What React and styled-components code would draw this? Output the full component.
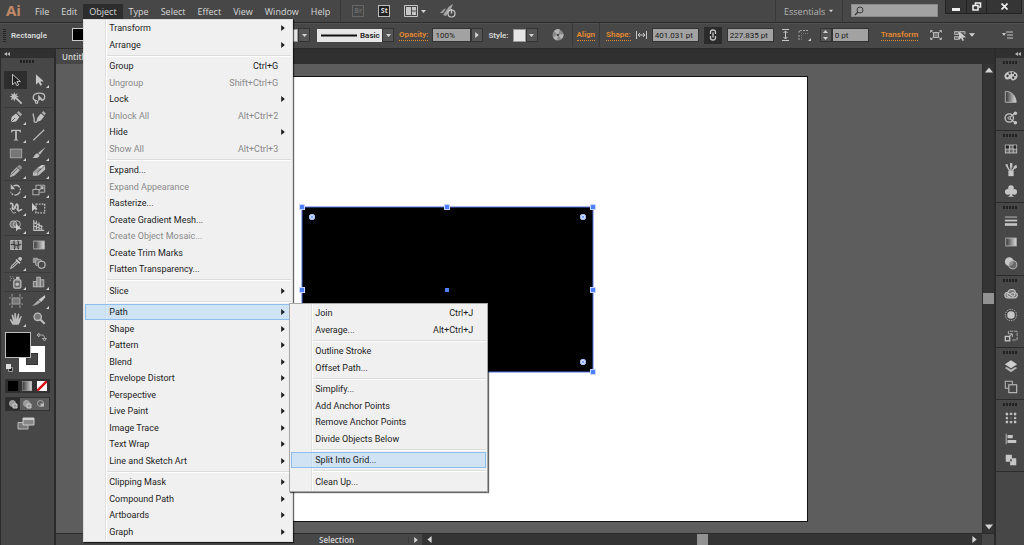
import React from 'react';
import styled, { createGlobalStyle, css } from 'styled-components';

const theme = {
  panel: '#474747',
  dark: '#303030',
  line: '#2b2b2b',
  canvas: '#5d5d5d',
  field: '#a2a2a2',
  icon: '#bdbdbd',
  orange: '#e68a2e',
  blue: '#4f80ff',
};

const GlobalStyle = createGlobalStyle`
  *, *::before, *::after { box-sizing: border-box; }
  body {
    margin: 0;
    overflow: hidden;
    background: ${theme.canvas};
    font-family: "Open Sans", "Noto Sans", sans-serif;
    font-size: 9px;
    color: #d8d8d8;
  }
  button, input, select { font: inherit; color: inherit; border: 0; padding: 0; margin: 0; background: none; border-radius: 0; }
  svg { display: block; flex: none; }
`;

// icons, all on a 16 x 16 grid
const icons = {
  select: <path d="M4 1.5v12l3-3 2 4 2-1-2-3.8h4z" fill="#1f1f1f" stroke="#d5d5d5" />,
  direct: <path d="M4.5 1.5v12l3-3 2 4 2-1-2-3.8h4z" fill="#c6c6c6" />,
  wand: <><path d="M6 1l1 3 3-1.500-1.500 3 3 1-3 1 1.500 3-3-1.500-1 3-1-3-3 1.500L3.500 7.500l-3-1 3-1L2 2.500 5 4z" fill="#bdbdbd" /><path d="M8.500 8.500l6 6" stroke="#bdbdbd" strokeWidth="2" /></>,
  lasso: <><path d="M6 11c-4 0-5-2-4.500-4.500C2 4 5 2.500 8.500 2.500s6 1.500 6 4-2 4-4 4.300M4.500 10.500c-1 1-1 3 .5 3.500s2-1 1-2.500" fill="none" stroke="#bdbdbd" strokeWidth="1.500" /><path d="M7 4v8l2-2 4 .2z" fill="#bdbdbd" /></>,
  pen: <><path d="M2 14l1-6 5-4 4 4-4 5z" fill="#c4c4c4" /><path d="M9 3l2-2 4 4-2 2z" fill="#a9a9a9" /><path d="M2.500 13.500L7 9" stroke="#474747" /></>,
  curve: <><path d="M5 14l1-5 4-5 4 3-4 5z" fill="#c4c4c4" /><path d="M11 3l2-2 3 3-2 2z" fill="#a9a9a9" /><path d="M1.500 4c-1 3 1.500 4 1 7s1 3.500 3 3" fill="none" stroke="#bdbdbd" strokeWidth="1.500" /></>,
  type: <path d="M2.500 2h11v3h-1l-1-1.700H9V13l1.500.500v.800h-5v-.800L7 13V3.300H4.500L3.500 5h-1z" fill="#bdbdbd" />,
  line: <path d="M1.500 14L14 2" stroke="#bdbdbd" strokeWidth="1.300" />,
  rect: <rect x="1.500" y="3.500" width="13" height="10" fill="#777" stroke="#a8a8a8" />,
  brush: <><path d="M15.500 1L7 8l2 2z" fill="#bdbdbd" /><path d="M6.500 8.500l2 2C8 14 4 14 0 13.500c2-.5 2-1 3-3 .7-1.500 2-2 3.500-2z" fill="#bdbdbd" /></>,
  pencil: <><path d="M1 15l1.500-5L9 3.500l3.500 3.500L6 13.500z" fill="#b5b5b5" /><path d="M9.500 3l1.500-1.500c1.500-1 4.500 1.500 3.500 3.500L13 6.500z" fill="#8d8d8d" /><path d="M3 12l7-7" stroke="#555" /></>,
  eraser: <><path d="M6 4.500L11 1h4l-4.500 4.500z" fill="#ccc" /><path d="M1 9l5-4.500h4.500L6.500 9.500z" fill="#999" /><path d="M1 9.500h5.500v4H1zM7 9.500L15 2v4.500l-8 7z" fill="#bbb" /></>,
  rotate: <><path d="M5 3.500c6-3 10 3 7 7.500s-9 3-10-1" fill="none" stroke="#bdbdbd" strokeWidth="1.500" strokeDasharray="8 1.500 2 1.500" /><path d="M2 1v6h5z" fill="#bdbdbd" /></>,
  scale: <><rect x="1" y="7.500" width="7" height="6" fill="none" stroke="#bdbdbd" /><path d="M4.500 7V2.500h10v8H8.500" fill="none" stroke="#bdbdbd" /><path d="M8 8.500l4-3.500M9.500 4.500H12.500V7.500" fill="none" stroke="#bdbdbd" strokeWidth="1.300" /></>,
  width: <><path d="M1 3c3-1 4 1 3 4s2 3 3 0 2-5 3-2-1 6 1 6 3-2 4-1" fill="none" stroke="#bdbdbd" strokeWidth="2" /><path d="M1 8l4 6 3-1M5 5l6 7" fill="none" stroke="#bdbdbd" /></>,
  free: <><rect x="4.500" y="3.500" width="10" height="10" fill="none" stroke="#bdbdbd" strokeWidth="1.500" strokeDasharray="2 1.300" /><path d="M0 2v10l2.500-2.500 4-.2z" fill="#c9c9c9" /></>,
  builder: <><circle cx="5" cy="6" r="4" fill="#777" stroke="#bdbdbd" /><circle cx="9" cy="6" r="4" fill="none" stroke="#bdbdbd" /><path d="M8 5v9l2.300-2.300 4 0z" fill="#ccc" /></>,
  persp: <><path d="M2 1v12h12M2 4l10 5M2 8l8 3M5 2v10M8 4v9M11 7v6" fill="none" stroke="#bdbdbd" strokeWidth="1.300" /></>,
  mesh: <><rect x="2" y="3" width="12" height="10" fill="#999" stroke="#ccc" /><path d="M2 8c3-3 5 3 12-1M6 3c-2 4 3 5 0 10M10 3c3 4-2 5 1 10" fill="none" stroke="#333" strokeWidth="1.200" /></>,
  gradient: <><rect x="2" y="3.500" width="12" height="9" fill="url(#gr)" stroke="#b5b5b5" /></>,
  dropper: <><path d="M10 3l1.500-1.500c2-1.500 4.500 1 3 3L13 6z" fill="#c4c4c4" /><path d="M8 4l4.500 4.500" stroke="#c4c4c4" strokeWidth="2" /><path d="M9 5.500L3 11.500l-1 2.500 2.500-1L10.500 7" fill="none" stroke="#bdbdbd" strokeWidth="1.200" /></>,
  blend: <><rect x="1" y="2" width="6" height="6" fill="#999" /><rect x="4" y="4" width="7" height="7" rx="2" fill="#777" stroke="#aaa" /><circle cx="11" cy="10" r="4" fill="#474747" stroke="#bdbdbd" strokeWidth="1.300" /></>,
  spray: <><rect x="5.500" y="5.500" width="8" height="9.500" rx="1.500" fill="#666" stroke="#bdbdbd" strokeWidth="1.500" /><path d="M8 2h4v3H8z" fill="#bdbdbd" /><circle cx="9.500" cy="10.500" r="2" fill="#bdbdbd" /><path d="M1 2h1M4 2h1M2 4h1M5 4h1M1 6h1" stroke="#bdbdbd" /></>,
  graph: <><rect x="1.500" y="7.500" width="4" height="6" fill="#777" stroke="#bdbdbd" /><rect x="5.500" y="2.500" width="4" height="11" fill="#888" stroke="#bdbdbd" /><rect x="9.500" y="5.500" width="4" height="8" fill="#777" stroke="#bdbdbd" /></>,
  artboard: <><rect x="3.500" y="4.500" width="9" height="7" fill="#777" stroke="#aaa" /><path d="M3.500 0v3M12.500 0v3M3.500 13v3M12.500 13v3M0 4.500h2M14 4.500h2M0 11.500h2M14 11.500h2" stroke="#aaa" /></>,
  slice: <><path d="M0 14L7 7l3 2-4 3z" fill="#aaa" /><path d="M7.500 6.500L15 1v3l-4.500 5z" fill="#ccc" /></>,
  hand: <path d="M4 14.500L1 9c0-1 1.300-1.300 2 0l1.500 1.500L3 4c0-1.200 1.500-1.500 2 0l1.200 4L6 2c0-1.300 2-1.300 2 0l.5 6L10 2.500c.3-1.200 2-.8 1.700.5L11 8.500l2-3.500c.8-1 2-.2 1.500.8-1.500 3-1 5-3.500 8.700z" fill="#b9b9b9" />,
  zoom: <><circle cx="6.500" cy="5.500" r="4.200" fill="#777" stroke="#bdbdbd" strokeWidth="1.500" /><path d="M9.500 8.500l5 5" stroke="#bdbdbd" strokeWidth="2.500" /></>,
  palette: <><path d="M8 2.500c4 0 7.500 2 7.500 5S13 13 10 13c-1.500 0-1.500-2-3-2s-1.500 1-3.500 1S.5 10 .5 8 3 2.500 8 2.500z" fill="#c6c6c6" /><g fill="#333"><circle cx="4" cy="8" r="1.300" /><circle cx="6.500" cy="5" r="1.200" /><circle cx="10" cy="4.700" r="1.200" /><circle cx="12.500" cy="7" r="1.200" /><circle cx="10.500" cy="10" r="1.300" /></g></>,
  guide: <path d="M1.500 1.500c7 0 12 5 12.500 12.500H1.500z" fill="url(#gr)" stroke="#bdbdbd" />,
  themes: <><circle cx="6" cy="8" r="4.800" fill="none" stroke="#c6c6c6" strokeWidth="1.500" /><circle cx="6" cy="8" r="1.500" fill="none" stroke="#c6c6c6" /><path d="M7 7l6-5M7 9l6 4.500" stroke="#c6c6c6" strokeWidth="1.200" /><circle cx="13" cy="2.500" r="2" fill="#c6c6c6" /><circle cx="13" cy="13.500" r="2" fill="#c6c6c6" /></>,
  swatches: <><rect x="1.500" y="3.500" width="13" height="9" fill="#666" stroke="#c6c6c6" /><path d="M1.500 8h13M6 3.500v9M10.500 3.500v9" stroke="#c6c6c6" /><path d="M2 4h3.500v3.500H2zM11 4h3v3.500h-3z" fill="#222" /></>,
  brushes: <><path d="M5 9h6v6H5z" fill="#c6c6c6" /><path d="M8 9V1M6.500 9L3 3M9.500 9l3-5" stroke="#c6c6c6" strokeWidth="1.500" /><path d="M1 2l3-1 1 4zM7 0h2.500v5H7zM11 4l3-2 1 3-3 2z" fill="#c6c6c6" /></>,
  symbols: <><circle cx="8" cy="4.500" r="3.200" fill="#c6c6c6" /><circle cx="4.300" cy="9" r="3.200" fill="#c6c6c6" /><circle cx="11.700" cy="9" r="3.200" fill="#c6c6c6" /><path d="M7 6h2l.5 7 2 1.500h-7l2-1.500z" fill="#c6c6c6" /></>,
  stroke: <><path d="M1 3.500h14" stroke="#c6c6c6" /><path d="M1 7.500h14" stroke="#c6c6c6" strokeWidth="2" /><path d="M1 12h14" stroke="#c6c6c6" strokeWidth="3" /></>,
  transparency: <><circle cx="6" cy="6.500" r="5" fill="#c6c6c6" /><circle cx="10" cy="10" r="4.700" fill="#777" fillOpacity=".7" stroke="#c6c6c6" /></>,
  cloud: <><path d="M4.500 12.500C-.5 12.500 0 6 4.500 6 6 1.500 13 2 13 6.500c4 1.500 2 6-1 6z" fill="#777" stroke="#c6c6c6" strokeWidth="1.300" /><path d="M7 10.500C3 12 2.500 7.500 5 7.500c2 0 3 3 5.500 3 2.500-.2 2.500-4.500-1-4-1 .2-2 1.500-2 1.500" fill="none" stroke="#c6c6c6" strokeWidth="1.300" /></>,
  appearance: <><circle cx="8" cy="8" r="4.300" fill="#c6c6c6" /><circle cx="8" cy="8" r="6.500" fill="none" stroke="#c6c6c6" strokeDasharray="1.500 1.300" /></>,
  export: <><path d="M5 6V2.500h10v10H9" fill="none" stroke="#b6b6b6" strokeDasharray="4 1" /><rect x="1.500" y="8.500" width="5" height="5" fill="none" stroke="#c6c6c6" strokeWidth="1.500" /><path d="M5 9l4-3M6 5.500h3.500V9" fill="none" stroke="#c6c6c6" /></>,
  layers: <><path d="M8 1.500L15 6l-7 4.500L1 6z" fill="#cfcfcf" /><path d="M3 9l5 3 5-3 2 1.200L8 15l-7-4.800z" fill="#b5b5b5" /></>,
  artboards: <><path d="M5 9.500H1.500v-8h8V5" fill="none" stroke="#b6b6b6" strokeWidth="1.200" /><rect x="5.500" y="5.500" width="9" height="9" fill="none" stroke="#c6c6c6" strokeWidth="1.200" /></>,
  transform: <><rect x="3.500" y="3.500" width="9" height="9" fill="none" stroke="#b6b6b6" strokeDasharray="1 1" /><path d="M2 2h2.500v2.500H2zM7 2h2v2.500H7zM11.500 2H14v2.500h-2.500zM2 7h2.500v2H2zM11.500 7H14v2h-2.500zM2 11.500h2.500V14H2zM7 11.500h2V14H7zM11.500 11.500H14V14h-2.500zM7.500 7.500h1v1h-1z" fill="#c6c6c6" /></>,
  align: <><path d="M2.500 2v12" stroke="#c6c6c6" /><path d="M4 3.500h6v3.500H4zM4 9h10v3.500H4z" fill="#c6c6c6" /></>,
  pathfinder: <path d="M2 2h7v4h5v8H7v-4H2zM7 7v2.500h2V7z" fillRule="evenodd" fill="#c6c6c6" />,
};

const Icon = ({ name, size = 14 }) => (
  <svg width={size} height={size} viewBox="0 0 16 16" aria-hidden="true">{icons[name]}</svg>
);

const Arrow = ({ dir = 'down', size = 5, color = '#d4d4d4' }) => {
  const d = { down: 'M0 2h10L5 8z', up: 'M0 8h10L5 2z', right: 'M2 0v10l6-5z', left: 'M8 0v10L2 5z' }[dir];
  return <svg width={size} height={size} viewBox="0 0 10 10" aria-hidden="true"><path d={d} fill={color} /></svg>;
};

const Collapse = () => (
  <svg width="6" height="4" viewBox="0 0 6 4" aria-hidden="true"><path d="M3 0v4L0 2zM6 0v4L3 2z" fill="#b5b5b5" /></svg>
);

const objectMenu = [
  ['Transform', '>'], ['Arrange', '>'], null,
  ['Group', 'Ctrl+G'], ['Ungroup', 'Shift+Ctrl+G', true], ['Lock', '>'], ['Unlock All', 'Alt+Ctrl+2', true], ['Hide', '>'], ['Show All', 'Alt+Ctrl+3', true], null,
  ['Expand...'], ['Expand Appearance', '', true], ['Rasterize...'], ['Create Gradient Mesh...'], ['Create Object Mosaic...', '', true], ['Create Trim Marks'], ['Flatten Transparency...'], null,
  ['Slice', '>'], null,
  ['Path', '>'], ['Shape', '>'], ['Pattern', '>'], ['Blend', '>'], ['Envelope Distort', '>'], ['Perspective', '>'], ['Live Paint', '>'], ['Image Trace', '>'], ['Text Wrap', '>'], ['Line and Sketch Art', '>'], null,
  ['Clipping Mask', '>'], ['Compound Path', '>'], ['Artboards', '>'], ['Graph', '>'],
];

const pathMenu = [
  ['Join', 'Ctrl+J'], ['Average...', 'Alt+Ctrl+J'], null,
  ['Outline Stroke'], ['Offset Path...'], null,
  ['Simplify...'], ['Add Anchor Points'], ['Remove Anchor Points'], ['Divide Objects Below'], null,
  ['Split Into Grid...'], null,
  ['Clean Up...'],
];

const toolGroups = [
  ['select', 'direct', 'wand', 'lasso'],
  ['pen', 'curve', 'type', 'line', 'rect', 'brush', 'pencil', 'eraser'],
  ['rotate', 'scale', 'width', 'free', 'builder', 'persp'],
  ['mesh', 'gradient', 'dropper', 'blend'],
  ['spray', 'graph'],
  ['artboard', 'slice', 'hand', 'zoom'],
];
const noFlyout = ['select', 'wand', 'lasso', 'curve', 'free', 'mesh', 'gradient', 'blend', 'artboard', 'zoom'];

const dockGroups = [
  ['palette', 'guide', 'themes'],
  ['swatches', 'brushes', 'symbols'],
  ['stroke', 'gradient', 'transparency'],
  ['cloud', 'appearance', 'export'],
  ['layers', 'artboards'],
  ['transform', 'align', 'pathfinder'],
];

const MenuList = ({ items, active, submenu, ...rest }) => (
  <Menu role="menu" {...rest}>
    {items.map((item, i) => {
      if (!item) return <MenuLine key={i} />;
      const [label, hint, disabled] = item;
      return (
        <MenuRow key={label}>
          <MenuItem role="menuitem" disabled={disabled} $active={label === active}>
            <span>{label}</span>
            {hint === '>' ? <ItemArrow><Arrow dir="right" size={6} color="#1c1c1c" /></ItemArrow> : <span>{hint}</span>}
          </MenuItem>
          {label === active && submenu}
        </MenuRow>
      );
    })}
  </Menu>
);

const MenuBar = () => (
  <Bar>
    <Logo>Ai</Logo>
    {['File', 'Edit', 'Object', 'Type', 'Select', 'Effect', 'View', 'Window', 'Help'].map((name) => (
      <MenuAnchor key={name}>
        <MenuButton $open={name === 'Object'}>{name}</MenuButton>
        {name === 'Object' && (
          <MenuList
            items={objectMenu}
            active="Path"
            submenu={<MenuList items={pathMenu} active="Split Into Grid..." $sub />}
          />
        )}
      </MenuAnchor>
    ))}
    <AppIcons>
      <AppBadge $dim>Br</AppBadge>
      <AppBadge>St</AppBadge>
      <IconButton aria-label="Arrange documents">
        <svg width="14" height="12" viewBox="0 0 14 12"><path d="M.5.5h13v11H.5z" fill="none" stroke="#c6c6c6" /><path d="M2 2h5v8H2zM8 2h4v3.500H8zM8 6.500h4V10H8z" fill="#c6c6c6" /></svg>
        <Arrow />
      </IconButton>
      <IconButton aria-label="GPU performance">
        <svg width="16" height="14" viewBox="0 0 16 14"><path d="M0 9L4 5l2-.5L3 9zM3 11L9 2.500 13 0l-2 5-5 7zM6 11l5-6" fill="#a5a5a5" /><circle cx="11.500" cy="9.500" r="3.500" fill="#474747" stroke="#ccc" strokeWidth="1.200" /><path d="M11.500 5v4.500" stroke="#ccc" strokeWidth="1.400" /></svg>
      </IconButton>
    </AppIcons>
    <Workspace>Essentials<Arrow size={4} /></Workspace>
    <Search>
      <svg width="10" height="10" viewBox="0 0 10 10"><circle cx="6" cy="4" r="3" fill="none" stroke="#3a3a3a" /><path d="M4 6L1 9" stroke="#3a3a3a" strokeWidth="1.500" /></svg>
      <input aria-label="Search" />
    </Search>
    <WindowButtons>
      <button aria-label="Minimize"><svg width="8" height="9" viewBox="0 0 8 9"><path d="M0 6h8v3H0z" fill="#eee" /></svg></button>
      <button aria-label="Restore"><svg width="10" height="9" viewBox="0 0 10 9"><path d="M3.500 3V1h5v4H7M1 3.500h5V8H1z" fill="none" stroke="#eee" strokeWidth="1.600" /></svg></button>
      <button aria-label="Close"><svg width="7" height="7" viewBox="0 0 7 7"><path d="M.5.5l6 6M6.500.5l-6 6" stroke="#eee" strokeWidth="1.700" /></svg></button>
    </WindowButtons>
  </Bar>
);

const ControlBar = () => (
  <Control>
    <SideGrip />
    <ObjectName>Rectangle</ObjectName>
    <FillGroup>
      <Swatch $dark aria-label="Fill" />
      <Combo><Swatch aria-label="Variable width profile" /><DropButton aria-label="Width profiles"><Arrow /></DropButton></Combo>
    </FillGroup>
    <Combo>
      <BrushField>
        <svg width="36" height="3" viewBox="0 0 36 3"><path d="M0 1.500h36" stroke="#111" strokeWidth="2" /></svg>
        <select aria-label="Brush definition"><option>Basic</option></select>
      </BrushField>
      <DropButton aria-label="Brushes"><Arrow /></DropButton>
    </Combo>
    <Field>
      <PanelLink href="#opacity" id="opacity-label">Opacity:</PanelLink>
      <Combo>
        <ValueInput $w={39} defaultValue="100%" aria-labelledby="opacity-label" />
        <DropButton aria-label="Opacity slider"><Arrow dir="right" size={6} /></DropButton>
      </Combo>
    </Field>
    <Field>
      <StyleLabel>Style:</StyleLabel>
      <Combo><Swatch aria-label="Graphic style" /><DropButton aria-label="Graphic styles"><Arrow /></DropButton></Combo>
    </Field>
    <RecolorSection>
      <IconButton aria-label="Recolor artwork">
        <svg width="12" height="12" viewBox="0 0 12 12"><circle cx="6" cy="6" r="5.500" fill="#8a8a8a" /><path d="M6 6L2 2a5.500 5.500 0 0 1 6-1.500zM6 6l5.500-1a5.500 5.500 0 0 1-2 5zM6 6l-1 5.500A5.500 5.500 0 0 1 1 8z" fill="#b5b5b5" /><circle cx="6" cy="6" r="1" fill="#333" /></svg>
      </IconButton>
    </RecolorSection>
    <Section><PanelLink href="#align">Align</PanelLink></Section>
    <ShapeGroup>
      <PanelLink href="#shape">Shape:</PanelLink>
      <svg width="11" height="8" viewBox="0 0 11 8"><path d="M.5 0v8M10.500 0v8M2 4h7M4 2L2 4l2 2M7 2l2 2-2 2" fill="none" stroke="#c6c6c6" /></svg>
      <ValueInput $w={47} defaultValue="401.031 pt" aria-label="Shape width" />
      <LinkButton aria-label="Link width and height">
        <svg width="8" height="12" viewBox="0 0 8 12"><path d="M1.500 5V3a2.500 2 0 0 1 5 0v2M1.500 7v2a2.500 2 0 0 0 5 0V7M4 3.500v5" fill="none" stroke="#c6c6c6" strokeWidth="1.300" /></svg>
      </LinkButton>
      <ValueInput $w={47} defaultValue="227.835 pt" aria-label="Shape height" />
    </ShapeGroup>
    <CornerGroup>
      <svg width="7" height="12" viewBox="0 0 7 12"><path d="M0 .5h7M0 11.500h7M3.500 2v8M1.500 4l2-2 2 2M1.500 8l2 2 2-2" fill="none" stroke="#c6c6c6" /></svg>
      <IconButton aria-label="Corner type">
        <svg width="13" height="12" viewBox="0 0 13 12"><path d="M1 11V5M5 1.500h5" stroke="#aaa" strokeDasharray="2 1" /><path d="M1 3.500C1 2 2 1.500 3.500 1.500" fill="none" stroke="#ccc" /><path d="M3.500 11V4.500H10" fill="none" stroke="#777" strokeDasharray="1 1" /><path d="M13 9v3h-3z" fill="#ccc" /></svg>
      </IconButton>
      <Combo>
        <Spinner aria-label="Step corner radius"><Arrow dir="up" /><Arrow /></Spinner>
        <ValueInput $w={37} defaultValue="0 pt" aria-label="Corner radius" />
      </Combo>
    </CornerGroup>
    <Section $last>
      <PanelLink href="#transform">Transform</PanelLink>
      <IconButton aria-label="Isolate selected object">
        <svg width="12" height="10" viewBox="0 0 12 10"><path d="M3.500 2.500h5v5h-5z" fill="#777" stroke="#bbb" /><path d="M.5 2.500v-2h2M9.500.5h2v2M.5 7.500v2h2M9.500 9.500h2v-2M1 1l2 1.500M11 1L9 2.500M1 9l2-1.500M11 9L9 7.500" fill="none" stroke="#b5b5b5" /></svg>
      </IconButton>
      <IconButton aria-label="Select similar objects">
        <svg width="12" height="11" viewBox="0 0 12 11"><path d="M.5 1.500h4v3h-4zM.5 6.500h4v3h-4zM6 1.500h5v3" fill="#777" stroke="#aaa" /><path d="M5 1v9l2-2 1.500 3 1.500-.8L8.500 7.500H12z" fill="#ccc" /></svg>
        <Arrow size={6} />
      </IconButton>
    </Section>
    <PanelMenu aria-label="Panel menu">
      <svg width="11" height="8" viewBox="0 0 11 8"><path d="M4 1h7M5 4h6M5 7h6" stroke="#c6c6c6" /><path d="M0 2h4L2 5z" fill="#c6c6c6" /></svg>
    </PanelMenu>
  </Control>
);

const Tools = () => (
  <ToolPanel>
    <PanelHead><Collapse /></PanelHead>
    <Grip />
    {toolGroups.map((group) => (
      <ToolGroup key={group[0]}>
        {group.map((name) => (
          <Tool key={name} aria-label={name} $active={name === 'select'} $flyout={!noFlyout.includes(name)}>
            <Icon name={name} />
          </Tool>
        ))}
      </ToolGroup>
    ))}
    <svg width="44" height="41" viewBox="0 0 44 41" aria-label="Fill and stroke">
      <path d="M14 14h26v26H14zM21 21v12h12V21z" fill="#fff" fillRule="evenodd" />
      <path d="M21.500 21.500h11v11h-11z" fill="none" stroke="#333" />
      <rect x=".5" y=".5" width="25" height="25" fill="#000" stroke="#bdbdbd" />
      <path d="M34 3h3c2 0 2.500 1 2.500 4M34 1l-2 2 2 2zM37.500 6.500h4l-2 2.500z" fill="none" stroke="#aaa" />
      <path d="M3.500 35.500h4v4h-4z" fill="#222" stroke="#999" /><path d="M1 32h5v5H1z" fill="#ddd" />
    </svg>
    <ModeRow>
      <button aria-label="Color"><svg width="10" height="10"><path d="M0 0h10v10H0z" fill="#000" /></svg></button>
      <button aria-label="Gradient"><svg width="10" height="10"><path d="M0 0h10v10H0z" fill="url(#gr)" stroke="#999" /></svg></button>
      <button aria-label="None"><svg width="10" height="10"><path d="M0 0h10v10H0z" fill="#fff" /><path d="M0 10L10 0" stroke="#d11" strokeWidth="2.500" /></svg></button>
    </ModeRow>
    <ModeRow $light>
      {['Draw normal', 'Draw behind', 'Draw inside'].map((name, i) => (
        <button key={name} aria-label={name}>
          <svg width="9" height="9" viewBox="0 0 9 9"><circle cx="3.500" cy="3.500" r="3" fill={i === 2 ? 'none' : '#999'} stroke="#aaa" />{i < 2 && <path d="M4 4h4v4H4z" fill="#999" stroke="#ccc" />}{i === 2 && <path d="M3.500 3.500H7v3H3.500z" fill="#bbb" />}</svg>
        </button>
      ))}
    </ModeRow>
    <ScreenMode aria-label="Change screen mode">
      <svg width="18" height="13" viewBox="0 0 18 13"><path d="M1 5.500h10v6.500H1z" fill="#777" stroke="#bbb" /><path d="M6 1h11v7H6z" fill="#888" stroke="#ccc" /><path d="M6 2h11" stroke="#ccc" strokeWidth="2" /></svg>
    </ScreenMode>
  </ToolPanel>
);

const Artwork = () => {
  const handles = [[6, 6], [151, 6], [297, 6], [6, 89], [297, 89], [6, 171], [297, 171]];
  return (
    <Shape width="303" height="177" viewBox="0 0 303 177" aria-label="Selected rectangle">
      <rect x="6" y="6" width="291" height="165" fill="#000" stroke="#4f6fe0" />
      {handles.map(([x, y]) => (
        <g key={`${x}-${y}`}>
          <rect x={x - 3} y={y - 3} width="6" height="6" fill="#c9d7ff" />
          <rect x={x - 2} y={y - 2} width="4" height="4" fill={theme.blue} />
        </g>
      ))}
      <rect x="149" y="87" width="4" height="4" fill={theme.blue} />
      {[[16, 16], [287, 16], [287, 161]].map(([x, y]) => (
        <g key={`${x}-${y}`}>
          <circle cx={x} cy={y} r="3" fill="#e8eeff" />
          <circle cx={x} cy={y} r="2.500" fill="none" stroke="#8fb0ff" />
          <circle cx={x} cy={y} r="1" fill={theme.blue} />
        </g>
      ))}
    </Shape>
  );
};

const App = () => (
  <Page>
    <GlobalStyle />
    <Defs width="0" height="0" aria-hidden="true">
      <linearGradient id="gr"><stop offset="0" stopColor="#333" /><stop offset="1" stopColor="#ddd" /></linearGradient>
    </Defs>
    <MenuBar />
    <ControlBar />
    <Main>
      <Tools />
      <Document>
        <Tabs><Tab>Untitled-1</Tab></Tabs>
        <Work>
          <Canvas><Artboard><Artwork /></Artboard></Canvas>
          <VScroll><Arrow dir="up" size={8} /><Thumb /><Arrow size={8} /></VScroll>
        </Work>
        <Status>
          <StatusLeft>
            <StatusName>Selection</StatusName>
            <IconButton aria-label="Status options"><Arrow dir="right" size={6} /></IconButton>
          </StatusLeft>
          <HScroll><Arrow dir="left" size={7} /><Thumb /><Arrow dir="right" size={7} /></HScroll>
          <Corner />
        </Status>
      </Document>
      <Dock>
        <PanelHead $right><Collapse /></PanelHead>
        {dockGroups.map((group) => (
          <DockGroup key={group[0]}>
            <Grip $dock />
            {group.map((name) => <DockButton key={name} aria-label={name}><Icon name={name} /></DockButton>)}
          </DockGroup>
        ))}
      </Dock>
    </Main>
  </Page>
);

const center = css`
  display: flex;
  align-items: center;
  justify-content: center;
`;

const Page = styled.div`
  display: flex;
  flex-direction: column;
  height: 100vh;
`;

const Defs = styled.svg`
  position: absolute;
`;

const Bar = styled.header`
  position: relative;
  z-index: 2;
  display: flex;
  align-items: flex-start;
  flex: none;
  height: 23px;
  background: ${theme.panel};
  border-bottom: 1px solid ${theme.line};
`;

const Logo = styled.div`
  width: 29px;
  padding-left: 6px;
  font: bold 15px/20px "Open Sans", sans-serif;
  color: #c08a66;
`;

const MenuAnchor = styled.div`
  position: relative;
  padding-top: 4px;
`;

const MenuButton = styled.button`
  display: block;
  height: 15px;
  padding: 0 6px;
  line-height: 15px;
  background: ${({ $open }) => ($open ? '#2d2d2d' : 'none')};
`;

const Menu = styled.div`
  position: absolute;
  z-index: 5;
  top: ${({ $sub }) => ($sub ? '-1px' : '100%')};
  left: ${({ $sub }) => ($sub ? '204px' : '0')};
  width: ${({ $sub }) => ($sub ? '199px' : '210px')};
  padding: ${({ $sub }) => ($sub ? '1px' : '0 1px 1px')};
  font-family: Roboto, "Open Sans", sans-serif;
  color: #1c1c1c;
  background: linear-gradient(90deg, transparent 21px, #e0e0e0 21px, #e0e0e0 22px, #fff 22px, #fff 23px, transparent 23px), #f0f0f0;
  border: 1px solid ${({ $sub }) => ($sub ? '#a8a8a8' : '#dcdcdc')};
  box-shadow: 1px 1px 1px rgba(0, 0, 0, 0.6);
`;

const MenuRow = styled.div`
  position: relative;
  height: 17px;
  &:nth-of-type(odd) { height: 16px; }
`;

const MenuItem = styled.button`
  display: flex;
  align-items: center;
  justify-content: space-between;
  width: 100%;
  height: 100%;
  padding: 0 12px 0 23px;
  white-space: nowrap;
  border: 1px solid transparent;
  &:disabled { color: #8a8a8a; }
  ${({ $active }) => $active && css`
    background: rgba(174, 213, 247, 0.5);
    border-color: #8cbdec;
  `}
`;

const ItemArrow = styled.span`
  margin-right: -8px;
`;

const MenuLine = styled.hr`
  height: 5px;
  margin: 0 0 0 22px;
  border: 0;
  background: linear-gradient(transparent 2px, #dcdcdc 2px, #dcdcdc 3px, #fff 3px, #fff 4px, transparent 4px);
`;

const IconButton = styled.button`
  ${center};
  gap: 3px;
`;

const AppIcons = styled.div`
  display: flex;
  align-items: center;
  gap: 14px;
  height: 22px;
  margin-left: 4px;
  padding-left: 11px;
  border-left: 1px solid #393939;
`;

const AppBadge = styled.button`
  width: 12px;
  height: 12px;
  font-size: 7px;
  line-height: 10px;
  font-weight: bold;
  color: ${({ $dim }) => ($dim ? '#6a6a6a' : '#ddd')};
  background: ${({ $dim }) => ($dim ? 'none' : '#222')};
  border: 1px solid ${({ $dim }) => ($dim ? '#666' : '#bbb')};
`;

const Workspace = styled.button`
  display: flex;
  align-items: center;
  justify-content: space-between;
  width: 68px;
  height: 22px;
  margin-left: auto;
  padding: 0 9px 0 8px;
  color: #b5b5b5;
  border: solid #393939;
  border-width: 0 1px;
`;

const Search = styled.label`
  display: flex;
  align-items: center;
  width: 87px;
  height: 13px;
  margin: 4px 7px 0 8px;
  padding-left: 2px;
  background: ${theme.field};
  border: 1px solid #8a8a8a;
  input { width: 70px; outline: 0; }
`;

const WindowButtons = styled.div`
  display: flex;
  height: 14px;
  margin-right: 2px;
  background: #353535;
  border: 1px solid #222;
  border-top: 0;
  button {
    ${center};
    width: 20px;
    & + button { border-left: 1px solid #222; }
    &:last-child { width: 35px; }
  }
`;

const Control = styled.div`
  display: flex;
  align-items: center;
  flex: none;
  height: 26px;
  padding-bottom: 2px;
  font-family: Roboto, "Open Sans", sans-serif;
  font-size: 8px;
  background: ${theme.panel};
  border-top: 1px solid #505050;
  border-bottom: 1px solid ${theme.line};
  white-space: nowrap;
  > * { flex: none; }
`;

const SideGrip = styled.div`
  width: 3px;
  height: 13px;
  margin: 0 5px 0 3px;
  background: repeating-linear-gradient(#252525 0 1px, transparent 1px 2px);
`;

const ObjectName = styled.div`
  width: 61px;
  font-weight: 600;
`;

const FillGroup = styled.div`
  display: flex;
  justify-content: space-between;
  width: 238px;
  margin-right: 7px;
`;

const Swatch = styled.button`
  width: 13px;
  height: 13px;
  background: ${({ $dark }) => ($dark ? '#000' : '#e6e6e6')};
  border: 1px solid ${({ $dark }) => ($dark ? '#ccc' : '#999')};
`;

const Combo = styled.div`
  display: flex;
  align-items: center;
`;

const DropButton = styled.button`
  ${center};
  width: 12px;
  height: 14px;
  background: #555;
  border: 1px solid #333;
`;

const BrushField = styled.div`
  display: flex;
  align-items: center;
  gap: 3px;
  width: 65px;
  height: 13px;
  padding-left: 4px;
  color: #222;
  background: #e6e6e6;
  select { appearance: none; outline: 0; font-weight: 600; }
`;

const Field = styled.div`
  display: flex;
  align-items: center;
  gap: 4px;
  margin-left: 5px;
`;

const PanelLink = styled.a`
  line-height: 10px;
  font-weight: 600;
  color: ${theme.orange};
  text-decoration: none;
  border-bottom: 1px dotted ${theme.orange};
`;

const StyleLabel = styled.span`
  font-weight: 600;
`;

const ValueInput = styled.input`
  width: ${({ $w }) => $w}px;
  height: 14px;
  padding-left: 2px;
  color: #1a1a1a;
  background: ${theme.field};
  border: 1px solid #333;
  outline: 0;
`;

const Section = styled.div`
  display: flex;
  align-items: center;
  gap: 12px;
  height: 24px;
  padding: 0 4px;
  border-right: ${({ $last }) => ($last ? '0' : '1px solid #393939')};
`;

const RecolorSection = styled(Section)`
  padding: 0 8px 0 14px;
`;

const ShapeGroup = styled.div`
  display: flex;
  align-items: center;
  gap: 5px;
  padding-left: 6px;
`;

const LinkButton = styled.button`
  ${center};
  width: 18px;
  height: 17px;
  background: #2b2b2b;
`;

const CornerGroup = styled.div`
  display: flex;
  align-items: center;
  gap: 9px;
  padding: 0 8px 0 8px;
`;

const Spinner = styled.button`
  ${center};
  flex-direction: column;
  gap: 2px;
  width: 12px;
  height: 14px;
  background: #555;
  border: 1px solid #333;
`;

const PanelMenu = styled(IconButton)`
  margin: 0 11px 0 auto;
`;

const Main = styled.main`
  display: flex;
  flex: 1;
  min-height: 0;
`;

const ToolPanel = styled.aside`
  flex: none;
  width: 56px;
  background: ${theme.panel};
  border: solid #2b2b2b;
  border-width: 0 2px 0 1px;
  > svg { margin: 4px 0 6px 4px; }
`;

const PanelHead = styled.div`
  display: flex;
  align-items: center;
  justify-content: ${({ $right }) => ($right ? 'flex-end' : 'flex-start')};
  height: 9px;
  padding: 0 3px;
  background: ${theme.dark};
`;

const Grip = styled.div`
  width: 15px;
  height: 3px;
  margin: ${({ $dock }) => ($dock ? '3px auto 1px' : '2px auto 8px')};
  background: repeating-linear-gradient(90deg, #222 0 2px, transparent 2px 3px);
`;

const ToolGroup = styled.div`
  display: grid;
  grid-template-columns: 23px 23px;
  margin: 0 3px;
  & + & { border-top: 1px solid #3b3b3b; }
`;

const Tool = styled.button`
  position: relative;
  ${center};
  height: 18px;
  background: ${({ $active }) => ($active ? '#2d2d2d' : 'none')};
  ${({ $flyout }) => $flyout && css`
    &::after {
      content: '';
      position: absolute;
      right: 1px;
      bottom: 1px;
      border: solid #d0d0d0;
      border-width: 0 0 3px 3px;
      border-left-color: transparent;
    }
  `}
`;

const ModeRow = styled.div`
  display: flex;
  height: 14px;
  margin: 0 4px 4px;
  background: ${({ $light }) => ($light ? '#5d5d5d' : '#333')};
  border: 1px solid #303030;
  button {
    ${center};
    flex: 1;
    &:first-child { background: #2d2d2d; }
  }
`;

const ScreenMode = styled.button`
  display: block;
  margin: 6px 0 0 16px;
`;

const Document = styled.section`
  display: flex;
  flex: 1;
  flex-direction: column;
  min-width: 0;
`;

const Tabs = styled.div`
  display: flex;
  flex: none;
  height: 15px;
  background: ${theme.dark};
`;

const Tab = styled.button`
  height: 15px;
  padding: 0 6px;
  font-size: 8px;
  font-weight: 600;
  background: ${theme.panel};
`;

const Work = styled.div`
  display: flex;
  flex: 1;
  min-height: 0;
`;

const Canvas = styled.div`
  ${center};
  flex: 1;
  min-width: 0;
  overflow: hidden;
`;

const Artboard = styled.div`
  position: relative;
  flex: none;
  width: 578px;
  height: 446px;
  background: #fff;
  border: 1px solid #111;
`;

const Shape = styled.svg`
  position: absolute;
  left: 65px;
  top: 124px;
`;

const VScroll = styled.div`
  display: flex;
  flex-direction: column;
  align-items: center;
  justify-content: space-between;
  width: 12px;
  padding: 2px 0;
  background: #343434;
  border-left: 1px solid ${theme.line};
`;

const Thumb = styled.div`
  width: 11px;
  height: 11px;
  background: #929292;
`;

const Status = styled.footer`
  display: flex;
  flex: none;
  height: 12px;
  border-top: 1px solid ${theme.line};
`;

const StatusLeft = styled.div`
  display: flex;
  align-items: center;
  justify-content: flex-end;
  width: 366px;
  font-size: 8px;
  background: ${theme.panel};
  button { width: 14px; border-left: 1px solid #393939; }
`;

const StatusName = styled.span`
  width: 89px;
  font-weight: 600;
  line-height: 12px;
`;

const HScroll = styled.div`
  display: flex;
  align-items: center;
  justify-content: space-between;
  flex: 1;
  padding: 0 4px;
  background: #343434;
`;

const Corner = styled.div`
  width: 12px;
  background: ${theme.panel};
`;

const Dock = styled.aside`
  flex: none;
  width: 30px;
  background: ${theme.panel};
  border-left: 2px solid #2b2b2b;
`;

const DockGroup = styled.div`
  padding: 0 0 1px;
  border-bottom: 1px solid ${theme.line};
  &:nth-of-type(even) { padding-bottom: 2px; }
`;

const DockButton = styled.button`
  display: block;
  height: 21px;
  margin: 0 8px;
`;

export default App;
